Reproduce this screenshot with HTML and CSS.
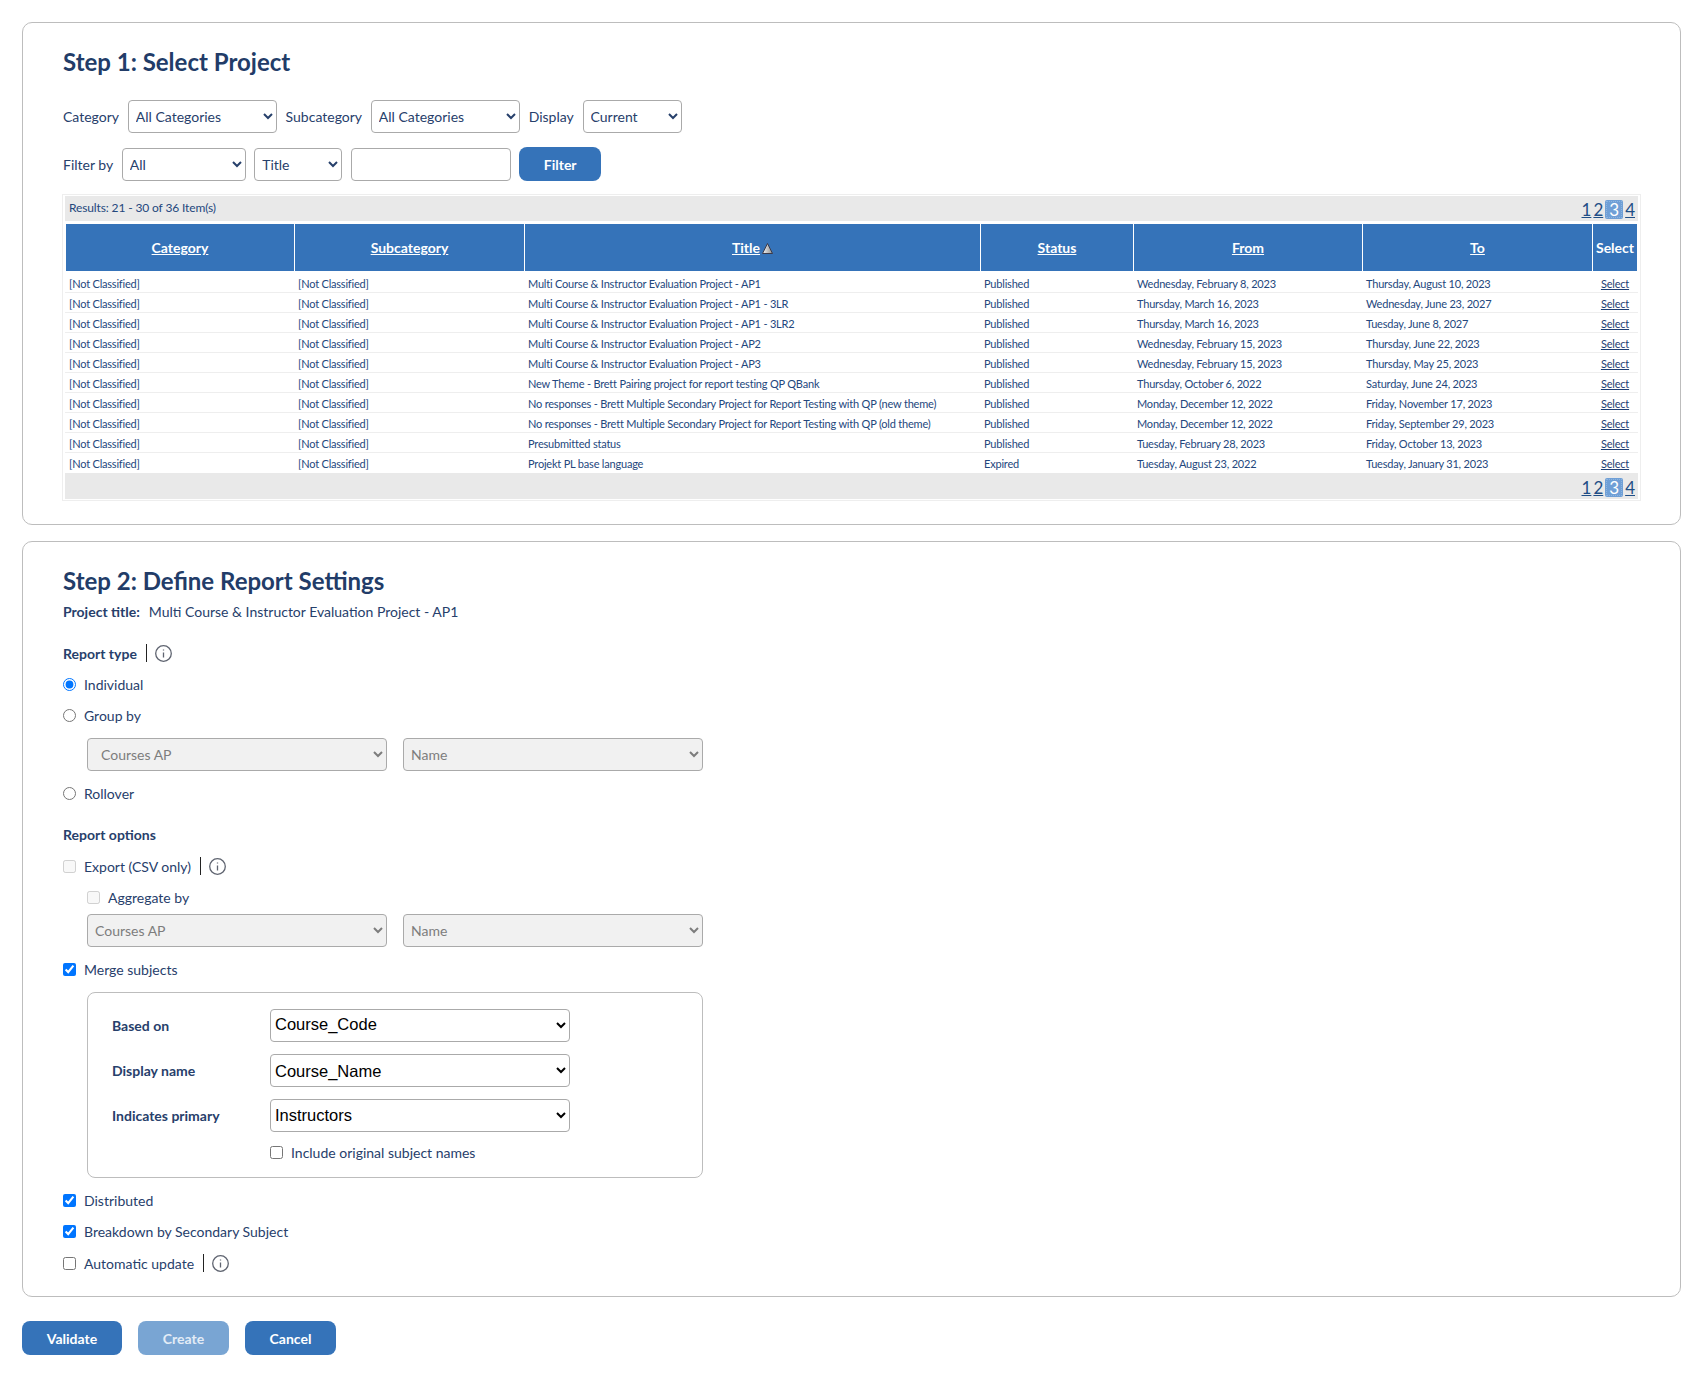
FILE: index.html
```html
<!DOCTYPE html>
<html>
<head lang="en">
    <meta charset="UTF-8">
    <link rel="stylesheet" href="styles.css">
    <title>Create Report</title>
</head>
<body>
<div class="page">

    <div class="card step1">
        <h2>Step 1: Select Project</h2>

        <div class="filters first">
            <label>Category</label>
            <select class="sel w149"><option>All Categories</option></select>
            <label>Subcategory</label>
            <select class="sel w149"><option>All Categories</option></select>
            <label>Display</label>
            <select class="sel w99"><option>Current</option></select>
        </div>
        <div class="filters second">
            <label>Filter by</label>
            <select class="sel w124"><option>All</option></select>
            <select class="sel w88"><option>Title</option></select>
            <input class="txt" type="text">
            <button class="btn btn_filter">Filter</button>
        </div>

        <div class="grid_wrap">
            <div class="bar top">
                <span class="results">Results: 21 - 30 of 36 Item(s)</span>
                <span class="pager"><a href="#">1</a><a href="#">2</a><a class="cur" href="#">3</a><a href="#">4</a></span>
            </div>
            <table class="grid">
                <colgroup>
                    <col class="c1"><col class="c2"><col class="c3"><col class="c4"><col class="c5"><col class="c6"><col class="c7">
                </colgroup>
                <thead>
                <tr>
                    <th><a href="#">Category</a></th>
                    <th><a href="#">Subcategory</a></th>
                    <th><a href="#">Title</a><svg class="sort" width="11" height="11" viewBox="0 0 11 11"><defs><linearGradient id="sortfill" x1="0" y1="0" x2="1" y2="0"><stop offset="0" stop-color="#f4f4f4"/><stop offset="1" stop-color="#8f8f8f"/></linearGradient></defs><path d="M5.5 .5 L10.5 10.5 H.5 Z" fill="url(#sortfill)" stroke="#3a3a4a" stroke-width="1"/></svg></th>
                    <th><a href="#">Status</a></th>
                    <th><a href="#">From</a></th>
                    <th><a href="#">To</a></th>
                    <th class="plain">Select</th>
                </tr>
                </thead>
                <tbody>
                <tr><td>[Not Classified]</td><td>[Not Classified]</td><td>Multi Course &amp; Instructor Evaluation Project - AP1</td><td>Published</td><td>Wednesday, February 8, 2023</td><td>Thursday, August 10, 2023</td><td class="act"><a href="#">Select</a></td></tr>
                <tr><td>[Not Classified]</td><td>[Not Classified]</td><td>Multi Course &amp; Instructor Evaluation Project - AP1 - 3LR</td><td>Published</td><td>Thursday, March 16, 2023</td><td>Wednesday, June 23, 2027</td><td class="act"><a href="#">Select</a></td></tr>
                <tr><td>[Not Classified]</td><td>[Not Classified]</td><td>Multi Course &amp; Instructor Evaluation Project - AP1 - 3LR2</td><td>Published</td><td>Thursday, March 16, 2023</td><td>Tuesday, June 8, 2027</td><td class="act"><a href="#">Select</a></td></tr>
                <tr><td>[Not Classified]</td><td>[Not Classified]</td><td>Multi Course &amp; Instructor Evaluation Project - AP2</td><td>Published</td><td>Wednesday, February 15, 2023</td><td>Thursday, June 22, 2023</td><td class="act"><a href="#">Select</a></td></tr>
                <tr><td>[Not Classified]</td><td>[Not Classified]</td><td>Multi Course &amp; Instructor Evaluation Project - AP3</td><td>Published</td><td>Wednesday, February 15, 2023</td><td>Thursday, May 25, 2023</td><td class="act"><a href="#">Select</a></td></tr>
                <tr><td>[Not Classified]</td><td>[Not Classified]</td><td>New Theme - Brett Pairing project for report testing QP QBank</td><td>Published</td><td>Thursday, October 6, 2022</td><td>Saturday, June 24, 2023</td><td class="act"><a href="#">Select</a></td></tr>
                <tr><td>[Not Classified]</td><td>[Not Classified]</td><td>No responses - Brett Multiple Secondary Project for Report Testing with QP (new theme)</td><td>Published</td><td>Monday, December 12, 2022</td><td>Friday, November 17, 2023</td><td class="act"><a href="#">Select</a></td></tr>
                <tr><td>[Not Classified]</td><td>[Not Classified]</td><td>No responses - Brett Multiple Secondary Project for Report Testing with QP (old theme)</td><td>Published</td><td>Monday, December 12, 2022</td><td>Friday, September 29, 2023</td><td class="act"><a href="#">Select</a></td></tr>
                <tr><td>[Not Classified]</td><td>[Not Classified]</td><td>Presubmitted status</td><td>Published</td><td>Tuesday, February 28, 2023</td><td>Friday, October 13, 2023</td><td class="act"><a href="#">Select</a></td></tr>
                <tr><td>[Not Classified]</td><td>[Not Classified]</td><td>Projekt PL base language</td><td>Expired</td><td>Tuesday, August 23, 2022</td><td>Tuesday, January 31, 2023</td><td class="act"><a href="#">Select</a></td></tr>
                </tbody>
            </table>
            <div class="bar bottom">
                <span class="pager"><a href="#">1</a><a href="#">2</a><a class="cur" href="#">3</a><a href="#">4</a></span>
            </div>
        </div>
    </div>

    <div class="card step2">
        <h2>Step 2: Define Report Settings</h2>
        <div class="line project"><b>Project title:</b><span>Multi Course &amp; Instructor Evaluation Project - AP1</span></div>

        <div class="line head_type">
            <b>Report type</b>
            <i class="sep"></i>
            <svg class="info" width="17" height="17" viewBox="0 0 17 17"><circle cx="8.5" cy="8.5" r="7.8"/><path d="M8.5 7.4 V12.6 M8.5 4.4 V5.6"/></svg>
        </div>
        <label class="line opt"><input type="radio" name="rt" checked>Individual</label>
        <label class="line opt"><input type="radio" name="rt">Group by</label>
        <div class="pair pair_group">
            <select class="sel off indent" disabled><option>Courses AP</option></select>
            <select class="sel off" disabled><option>Name</option></select>
        </div>
        <label class="line rollover"><input type="radio" name="rt">Rollover</label>

        <div class="line head_opt"><b>Report options</b></div>
        <div class="line export">
            <label><input type="checkbox" disabled>Export (CSV only)</label>
            <i class="sep"></i>
            <svg class="info" width="17" height="17" viewBox="0 0 17 17"><circle cx="8.5" cy="8.5" r="7.8"/><path d="M8.5 7.4 V12.6 M8.5 4.4 V5.6"/></svg>
        </div>
        <label class="line opt sub"><input type="checkbox" disabled>Aggregate by</label>
        <div class="pair pair_agg">
            <select class="sel off" disabled><option>Courses AP</option></select>
            <select class="sel off" disabled><option>Name</option></select>
        </div>
        <label class="line merge"><input type="checkbox" checked>Merge subjects</label>

        <div class="merge_box">
            <div class="merge_grid">
                <b>Based on</b>
                <select class="sel big up3"><option>Course_Code</option></select>
                <b>Display name</b>
                <select class="sel big"><option>Course_Name</option></select>
                <b>Indicates primary</b>
                <select class="sel big up2"><option>Instructors</option></select>
            </div>
            <label class="line include"><input type="checkbox">Include original subject names</label>
        </div>

        <label class="line distributed"><input type="checkbox" checked>Distributed</label>
        <label class="line opt"><input type="checkbox" checked>Breakdown by Secondary Subject</label>
        <div class="line auto">
            <label><input type="checkbox">Automatic update</label>
            <i class="sep"></i>
            <svg class="info" width="17" height="17" viewBox="0 0 17 17"><circle cx="8.5" cy="8.5" r="7.8"/><path d="M8.5 7.4 V12.6 M8.5 4.4 V5.6"/></svg>
        </div>
    </div>

    <div class="actions">
        <button class="btn btn_validate">Validate</button>
        <button class="btn btn_create" disabled>Create</button>
        <button class="btn btn_cancel">Cancel</button>
    </div>

</div>
</body>
</html>
```

FILE: styles.css
```css
* {
    box-sizing: border-box;
}

body {
    margin: 0;
    background: #fff;
    color: #27406b;
    font-family: "Lato", "Liberation Sans", sans-serif;
    font-size: 14px;
}

.page {
    padding: 22px 21px 0 22px;
}

.card {
    border: 1px solid #bdbdbd;
    border-radius: 10px;
    background: #fff;
}

.step1 {
    padding: 23px 39px 23px 40px;
}

.step2 {
    margin-top: 16px;
    padding: 23px 39px 22px 40px;
}

h2 {
    margin: 0;
    height: 32px;
    color: #223c68;
    font-size: 24px;
    font-weight: 700;
    line-height: 32px;
}

/* step 1 filters */
.filters {
    display: flex;
    align-items: flex-end;
}

.filters label {
    align-self: center;
}

.filters.first {
    gap: 8.8px;
    margin-top: 22px;
}

.filters.second {
    gap: 8.5px;
    margin-top: 14px;
}

.sel {
    height: 33px;
    padding: 0 0 0 3px;
    border: 1px solid #aaa;
    border-radius: 4px;
    background: #fff;
    color: #27406b;
    font-family: "Lato", "Liberation Sans", sans-serif;
    font-size: 14px;
}

.w149 { width: 149px; }
.w99 { width: 99px; }
.w124 { width: 124px; }
.w88 { width: 88px; }

.txt {
    width: 160px;
    height: 33px;
    border: 1px solid #aaa;
    border-radius: 4px;
}

.btn {
    height: 34px;
    border: 0;
    border-radius: 8px;
    background: #3573b9;
    color: #fff;
    font-family: "Lato", "Liberation Sans", sans-serif;
    font-size: 14px;
    font-weight: 700;
}

.btn_filter { width: 82px; }

/* step 1 grid */
.grid_wrap {
    margin: 13px 0 0 -1px;
    padding: 1px 2px;
    border: 1px solid #eee;
}

.bar {
    display: flex;
    align-items: center;
    justify-content: space-between;
    background: #e9e9e9;
    padding: 0 3px 0 4px;
}

.bar.top {
    height: 25px;
}

.bar.bottom {
    height: 26px;
    justify-content: flex-end;
}

.results {
    margin-bottom: 2px;
    font-size: 12px;
    letter-spacing: -.13px;
    color: #24477d;
}

.pager {
    display: flex;
    gap: 2px;
    margin-top: 2px;
    font-size: 17px;
    line-height: 19px;
}

.pager a {
    color: #1f4e86;
}

.pager a.cur {
    padding: 0 4px;
    border-radius: 2px;
    background: #6f9fd6;
    color: #fff;
    text-decoration: none;
    outline: 1px dotted #8db5e0;
    outline-offset: -2px;
}

.grid {
    width: 1573px;
    margin-top: 3px;
    border-collapse: separate;
    border-spacing: 0;
    table-layout: fixed;
    color: #24477d;
    font-size: 11px;
    letter-spacing: -.2px;
}

.c1 { width: 229px; }
.c2 { width: 230px; }
.c3 { width: 456px; }
.c4 { width: 153px; }
.c5 { width: 229px; }
.c6 { width: 230px; }
.c7 { width: 46px; }

.grid th {
    height: 47px;
    padding: 0;
    border-left: 1px solid #fff;
    background: #3573b9;
    color: #fff;
    font-size: 14px;
    font-weight: 700;
    letter-spacing: 0;
    text-align: center;
}

.grid th:last-child {
    border-right: 1px solid #fff;
}

.grid th a {
    color: #fff;
}

.sort {
    margin-left: 2px;
    vertical-align: -1px;
}

.grid td {
    height: 20px;
    padding: 1px 0 0 4px;
    border-bottom: 1px solid #eee;
    white-space: nowrap;
}

.grid tbody tr:first-child td {
    height: 22px;
    padding-top: 3px;
}

.grid tbody tr:last-child td {
    padding-top: 0;
    border-bottom: 0;
}

.grid td.act {
    padding-left: 0;
    text-align: center;
}

.grid td a {
    color: #1f3f73;
}

/* step 2 */
.line {
    display: flex;
    align-items: center;
    height: 20px;
    padding-bottom: 2px;
}

.line input {
    width: 13px;
    height: 13px;
    margin: 0 8px 0 0;
}

.line label {
    display: flex;
    align-items: center;
}

.project {
    margin-top: 5px;
}

.project span {
    margin-left: 9px;
}

.head_type {
    margin-top: 22px;
}

.opt {
    margin-top: 11px;
}

.sep {
    width: 1px;
    height: 18px;
    margin: 0 8px 0 9px;
    background: #222;
}

.info {
    fill: none;
    stroke: #5f6470;
    stroke-width: 1.3;
}

.pair {
    display: flex;
    gap: 16px;
    margin-left: 24px;
}

.pair .sel {
    width: 300px;
}

.pair_group {
    margin-top: 12px;
}

.pair_agg {
    margin-top: 6px;
}

.sel.off {
    background: #f1f1f1;
    color: #7d7d7d;
    opacity: 1;
}

.sel.indent {
    padding-left: 9px;
}

.rollover {
    margin-top: 13px;
}

.head_opt {
    margin-top: 21px;
}

.export {
    margin-top: 12px;
}

.sub {
    margin-left: 24px;
}

.merge {
    margin-top: 13px;
}

.merge_box {
    width: 616px;
    height: 186px;
    margin: 12px 0 0 24px;
    padding: 16px 24px 0;
    border: 1px solid #bdbdbd;
    border-radius: 8px;
}

.merge_grid {
    display: grid;
    grid-template-columns: 158px 300px;
    row-gap: 12px;
    align-items: center;
}

.sel.big {
    color: #000;
    font-family: "Liberation Sans", Arial, sans-serif;
    font-size: 16.5px;
    padding-left: 0;
}

.sel.up3 {
    padding-bottom: 4px;
}

.sel.up2 {
    padding-bottom: 2px;
}

.include {
    margin: 11px 0 0 158px;
}

.distributed {
    margin-top: 13px;
}

.auto {
    margin-top: 12px;
}

.actions {
    display: flex;
    gap: 16px;
    margin-top: 24px;
    padding-bottom: 20px;
}

.btn_validate { width: 100px; }
.btn_create { width: 91px; background: #79a5d3; color: #e3ecf6; }
.btn_cancel { width: 91px; }
```
